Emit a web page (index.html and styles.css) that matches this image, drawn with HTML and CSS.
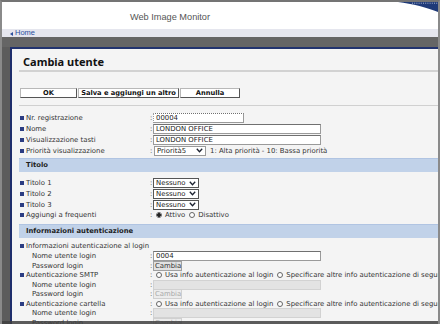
FILE: index.html
```html
<!DOCTYPE html>
<html>
<head>
    <title>Cambia utente - Web Image Monitor</title>
    <meta name="viewport" content="width=device-width, initial-scale=1.0">
    <link rel="stylesheet" href="styles.css">
</head>
<body>
<div class="window">
    <header class="top">
        <span class="brand">Web Image Monitor</span>
        <svg class="swoosh" width="40" height="11" viewBox="0 0 40 11">
            <path d="M0 0 L40 0 L40 10 C30 6 14 1.5 0 0 Z" fill="#1f3a78"/>
            <line x1="14" y1="1.2" x2="40" y2="1.2" stroke="#c8d0e4" stroke-width="0.8" stroke-dasharray="1 1.2"/>
        </svg>
    </header>
    <nav class="homebar"><span class="arrow"></span>Home</nav>
    <div class="band"></div>

    <main class="dialog">
        <h1>Cambia utente</h1>

        <div class="buttons">
            <span class="btn btn-ok">OK</span>
            <span class="btn btn-save">Salva e aggiungi un altro</span>
            <span class="btn btn-cancel">Annulla</span>
        </div>

        <!-- Dati utente -->
        <div class="group group-main">
            <div class="row">
                <span class="label"><i class="dot"></i>Nr. registrazione</span><span class="colon">:</span>
                <span class="input input-short">00004</span>
            </div>
            <div class="row">
                <span class="label"><i class="dot"></i>Nome</span><span class="colon">:</span>
                <span class="input input-long">LONDON OFFICE</span>
            </div>
            <div class="row">
                <span class="label"><i class="dot"></i>Visualizzazione tasti</span><span class="colon">:</span>
                <span class="input input-long">LONDON OFFICE</span>
            </div>
            <div class="row">
                <span class="label"><i class="dot"></i>Priorità visualizzazione</span><span class="colon">:</span>
                <span class="field">
                    <span class="select select-prio">Priorità5<svg class="chev" width="7" height="5" viewBox="0 0 7 5"><path d="M0.8 0.8 L3.5 3.8 L6.2 0.8" fill="none" stroke="#1c2230" stroke-width="1.3"/></svg></span>
                    <span class="note">1: Alta priorità - 10: Bassa priorità</span>
                </span>
            </div>
        </div>

        <!-- Titolo -->
        <div class="section">Titolo</div>
        <div class="group group-title">
            <div class="row">
                <span class="label"><i class="dot"></i>Titolo 1</span><span class="colon">:</span>
                <span class="select select-title">Nessuno<svg class="chev" width="7" height="5" viewBox="0 0 7 5"><path d="M0.8 0.8 L3.5 3.8 L6.2 0.8" fill="none" stroke="#1c2230" stroke-width="1.3"/></svg></span>
            </div>
            <div class="row">
                <span class="label"><i class="dot"></i>Titolo 2</span><span class="colon">:</span>
                <span class="select select-title">Nessuno<svg class="chev" width="7" height="5" viewBox="0 0 7 5"><path d="M0.8 0.8 L3.5 3.8 L6.2 0.8" fill="none" stroke="#1c2230" stroke-width="1.3"/></svg></span>
            </div>
            <div class="row">
                <span class="label"><i class="dot"></i>Titolo 3</span><span class="colon">:</span>
                <span class="select select-title">Nessuno<svg class="chev" width="7" height="5" viewBox="0 0 7 5"><path d="M0.8 0.8 L3.5 3.8 L6.2 0.8" fill="none" stroke="#1c2230" stroke-width="1.3"/></svg></span>
            </div>
            <div class="row">
                <span class="label"><i class="dot"></i>Aggiungi a frequenti</span><span class="colon">:</span>
                <span class="field">
                    <span class="radio checked"></span>Attivo
                    <span class="radio"></span>Disattivo
                </span>
            </div>
        </div>

        <!-- Informazioni autenticazione -->
        <div class="section">Informazioni autenticazione</div>
        <div class="group group-auth">
            <div class="row">
                <span class="label wide"><i class="dot"></i>Informazioni autenticazione al login</span>
            </div>
            <div class="row">
                <span class="label sub">Nome utente login</span><span class="colon">:</span>
                <span class="input input-long">0004</span>
            </div>
            <div class="row">
                <span class="label sub">Password login</span><span class="colon">:</span>
                <span class="btn-small">Cambia</span>
            </div>
            <div class="row">
                <span class="label"><i class="dot"></i>Autenticazione SMTP</span><span class="colon">:</span>
                <span class="field">
                    <span class="radio"></span>Usa info autenticazione al login
                    <span class="radio"></span>Specificare altre info autenticazione di seguito
                </span>
            </div>
            <div class="row">
                <span class="label sub">Nome utente login</span><span class="colon">:</span>
                <span class="input input-long disabled"></span>
            </div>
            <div class="row">
                <span class="label sub">Password login</span><span class="colon">:</span>
                <span class="btn-small disabled">Cambia</span>
            </div>
            <div class="row">
                <span class="label"><i class="dot"></i>Autenticazione cartella</span><span class="colon">:</span>
                <span class="field">
                    <span class="radio"></span>Usa info autenticazione al login
                    <span class="radio"></span>Specificare altre info autenticazione di seguito
                </span>
            </div>
            <div class="row">
                <span class="label sub">Nome utente login</span><span class="colon">:</span>
                <span class="input input-long disabled"></span>
            </div>
            <div class="row">
                <span class="label sub">Password login</span><span class="colon">:</span>
                <span class="btn-small disabled">Cambia</span>
            </div>
        </div>
    </main>
</div>
</body>
</html>
```

FILE: styles.css
```css
body {
    margin: 0;
    padding: 0;
    background-color: #5c5c5c;
    font-family: "DejaVu Sans", Verdana, sans-serif;
    color: #333;
}

.window {
    position: relative;
    width: 440px;
    height: 324px;
    box-sizing: border-box;
    border-top: 2px solid #747474;
    border-left: 2px solid #8a8a8a;
    border-right: 2px solid #8a8a8a;
    background-color: #5c5c5c;
    overflow: hidden;
    display: flex;
    flex-direction: column;
}

/* bottom edge of the captured window */
.window::after {
    content: "";
    position: absolute;
    left: 0;
    right: 0;
    bottom: 0;
    height: 3px;
    background-color: rgba(64, 64, 64, 0.85);
}

.top {
    position: relative;
    height: 27px;
    flex: none;
    background-color: white;
    display: flex;
    align-items: center;
    padding: 3px 0 0 128px;
    box-sizing: border-box;
}

.brand {
    font-family: "Liberation Sans", Arial, sans-serif;
    font-size: 9.2px;
    color: #555;
}

.swoosh {
    position: absolute;
    top: 0;
    right: 0;
}

.homebar {
    height: 8px;
    flex: none;
    background-color: #e5e6ee;
    font-family: "Liberation Sans", Arial, sans-serif;
    font-size: 7.5px;
    line-height: 8px;
    color: #2c4f9e;
    padding-left: 8px;
    display: flex;
    align-items: center;
}

.arrow {
    width: 0;
    height: 0;
    border-top: 2px solid transparent;
    border-bottom: 2px solid transparent;
    border-right: 3px solid #2c4f9e;
    margin: 1px 2px 0 0;
}

.band {
    height: 10px;
    flex: none;
    background-color: #656565;
}

.dialog {
    flex: 1;
    margin-left: 8px;
    border-left: 2px solid #1e2d6b;
    border-top: 2px solid #22336e;
    background-color: #f4f4f4;
    padding-left: 7px;
}

h1 {
    margin: 0;
    height: 23px;
    box-sizing: border-box;
    padding: 7px 0 0 4px;
    font-family: "Noto Sans", sans-serif;
    font-size: 11px;
    line-height: 11px;
    font-weight: bold;
    color: #111;
    border-bottom: 2px solid #d2d2d2;
}

.buttons {
    display: flex;
    padding: 16px 0 7px 1px;
    border-bottom: 1px solid #d0d0d0;
}

.btn {
    height: 10px;
    box-sizing: border-box;
    border: 1px solid #b8b8b8;
    border-right-color: #555;
    border-bottom-color: #555;
    background-color: white;
    font-size: 6.7px;
    font-weight: bold;
    line-height: 8px;
    color: #111;
    text-align: center;
    margin-right: 1px;
}

.btn-ok {
    width: 57px;
}

.btn-save {
    width: 101px;
}

.btn-cancel {
    width: 60px;
}

.row {
    display: grid;
    grid-template-columns: 131px 3px 1fr;
    align-items: center;
    font-size: 6.9px;
    white-space: nowrap;
}

.group-main {
    padding-top: 7px;
}

.group-main .row {
    height: 10.8px;
}

.group-title {
    padding-top: 5.6px;
}

.group-title .row {
    height: 10.7px;
}

.group-auth {
    padding-top: 3.2px;
}

.group-auth .row {
    height: 9.6px;
}

.label {
    display: flex;
    align-items: center;
    color: #333;
}

.label.wide {
    grid-column: 1 / 4;
}

.label.sub {
    padding-left: 13px;
}

.dot {
    width: 4px;
    height: 4px;
    background-color: #2b3c82;
    margin: 0 2px 0 1px;
}

.colon {
    color: #333;
}

.field {
    display: flex;
    align-items: center;
    gap: 2px;
    padding-left: 1px;
}

.input {
    display: block;
    height: 10px;
    box-sizing: border-box;
    border: 1px solid #9a9a9a;
    border-top-color: #707070;
    background-color: white;
    padding-left: 2px;
    line-height: 8px;
    color: #222;
    margin-left: 0;
}

.input-short {
    width: 91px;
    border-style: dotted solid solid dotted;
}

.input-long {
    width: 168px;
}

.input.disabled {
    background-color: #e3e3e3;
    border-color: #d2d2d2;
}

.select {
    display: flex;
    align-items: center;
    justify-content: space-between;
    height: 10px;
    box-sizing: border-box;
    border: 1px solid #555;
    background-color: white;
    padding: 0 2px 0 2px;
    color: #222;
}

.select-prio {
    width: 52px;
    border-color: #9a9a9a;
}

.select-title {
    width: 46px;
}

.note {
    margin-left: 2px;
    color: #333;
}

.radio {
    width: 6px;
    height: 6px;
    border: 1px solid #666;
    border-radius: 50%;
    background-color: white;
    box-sizing: border-box;
    margin: 0 1px 0 2px;
}

.radio.checked {
    background: radial-gradient(circle, #222 0 1.6px, white 1.9px);
}

.btn-small {
    display: block;
    width: 29px;
    height: 10px;
    box-sizing: border-box;
    border: 1px solid #a0a0a0;
    background-color: #e2e2e2;
    color: #333;
    line-height: 8px;
    padding-left: 1px;
}

.btn-small.disabled {
    color: #a8a8a8;
    border-color: #d0d0d0;
    background-color: #ececec;
}

.section {
    height: 14px;
    box-sizing: border-box;
    background-color: #c1d2e9;
    border-top: 1px solid #b0c4e2;
    font-size: 6.8px;
    font-weight: bold;
    line-height: 13px;
    color: #1e1e1e;
    padding-left: 7px;
    margin-top: 2px;
}

.group-title + .section {
    margin-top: 3.6px;
}
```
